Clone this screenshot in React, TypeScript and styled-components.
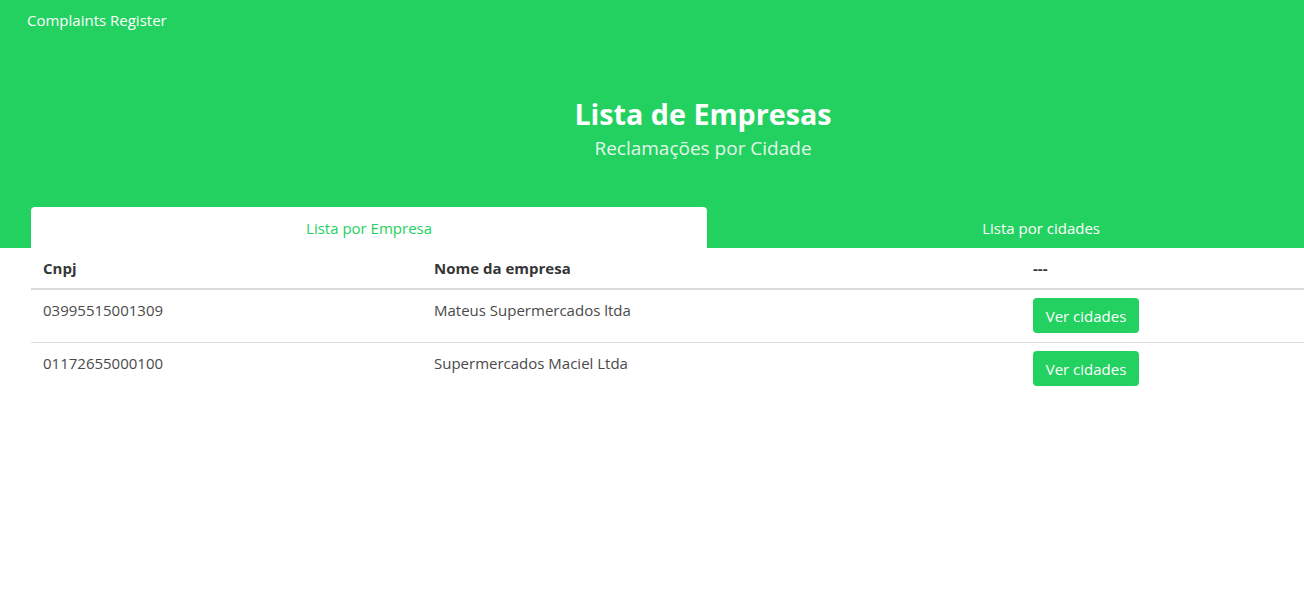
import React from "react";
import styled, { createGlobalStyle } from "styled-components";

const GREEN = "#23d160";

const Global = createGlobalStyle`
  html, body { margin: 0; padding: 0; background: #fff; overflow: hidden; }
  body { font-family: "Open Sans", "Noto Sans", sans-serif; color: #4a4a4a; }
`;

const Viewport = styled.div`
  width: 100vw;
  overflow: hidden;
`;

const Page = styled.div`
  width: 1406px;
`;

const Hero = styled.section`
  background: ${GREEN};
  color: #fff;
  display: flex;
  flex-direction: column;
`;

const Navbar = styled.nav`
  height: 41px;
  display: flex;
  align-items: center;
  padding: 0 0 0 27px;
`;

const Brand = styled.a`
  font-size: 15px;
  color: #fff;
  text-decoration: none;
  margin-top: -1px;
`;

const HeroBody = styled.div`
  display: flex;
  flex-direction: column;
  align-items: center;
  padding-top: 51px;
  height: 166px;
  box-sizing: border-box;
`;

const Title = styled.h1`
  margin: 0;
  font-size: 28.7px;
  font-weight: 700;
  line-height: 44px;
  color: #fff;
`;

const Subtitle = styled.h2`
  margin: 0;
  font-size: 19px;
  font-weight: 400;
  line-height: 24px;
  color: rgba(255, 255, 255, 0.9);
`;

const Tabs = styled.ul`
  list-style: none;
  margin: 0 31px;
  padding: 0;
  display: flex;
`;

const Tab = styled.li<{ $active?: boolean }>`
  flex: 1 0 auto;
  height: 41px;
  padding: 0 16px;
  display: flex;
  align-items: center;
  justify-content: center;
  font-size: 15px;
  color: ${(p) => (p.$active ? GREEN : "#fff")};
  background: ${(p) => (p.$active ? "#fff" : "transparent")};
  border-radius: 4px 4px 0 0;
  cursor: pointer;
`;

const Content = styled.div`
  padding: 0 31px;
`;

const Table = styled.table`
  width: 100%;
  table-layout: fixed;
  border-collapse: collapse;
  font-size: 15px;
`;

const Th = styled.th<{ $w?: number }>`
  width: ${(p) => (p.$w ? `${p.$w}px` : "auto")};
  text-align: left;
  font-weight: 700;
  color: #363636;
  padding: 8px 12px 8px;
  border-bottom: 2px solid #dbdbdb;
  height: 24px;
`;

const Tr = styled.tr`
  & + & td { border-top: 1px solid #dbdbdb; }
`;

const Td = styled.td`
  padding: 10px 12px 0;
  height: 42px;
  vertical-align: top;
  color: #4a4a4a;
  box-sizing: content-box;
`;

const Button = styled.button`
  background: ${GREEN};
  color: #fff;
  border: none;
  border-radius: 4px;
  font-family: inherit;
  font-size: 15px;
  height: 35px;
  padding: 0 12px;
  margin-top: -2px;
  width: 106px;
  cursor: pointer;
`;

const rows = [
  { cnpj: "03995515001309", nome: "Mateus Supermercados ltda" },
  { cnpj: "01172655000100", nome: "Supermercados Maciel Ltda" },
];

export default function App() {
  return (
    <Viewport>
      <Global />
      <Page>
        <Hero>
          <Navbar>
            <Brand>Complaints Register</Brand>
          </Navbar>
          <HeroBody>
            <Title>Lista de Empresas</Title>
            <Subtitle>Reclamações por Cidade</Subtitle>
          </HeroBody>
          <Tabs>
            <Tab $active>Lista por Empresa</Tab>
            <Tab>Lista por cidades</Tab>
          </Tabs>
        </Hero>
        <Content>
          <Table>
            <thead>
              <tr>
                <Th $w={367}>Cnpj</Th>
                <Th $w={575}>Nome da empresa</Th>
                <Th>---</Th>
              </tr>
            </thead>
            <tbody>
              {rows.map((r) => (
                <Tr key={r.cnpj}>
                  <Td>{r.cnpj}</Td>
                  <Td>{r.nome}</Td>
                  <Td>
                    <Button>Ver cidades</Button>
                  </Td>
                </Tr>
              ))}
            </tbody>
          </Table>
        </Content>
      </Page>
    </Viewport>
  );
}
